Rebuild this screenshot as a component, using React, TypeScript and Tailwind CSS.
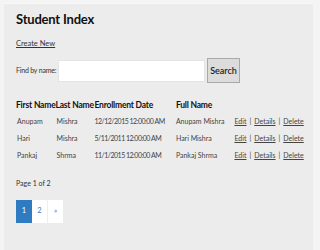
const students = [
  { first: "Anupam", last: "Mishra", date: "12/12/2015 12:00:00 AM", full: "Anupam Mishra" },
  { first: "Hari", last: "Mishra", date: "5/11/2011 12:00:00 AM", full: "Hari Mishra" },
  { first: "Pankaj", last: "Shrma", date: "11/1/2015 12:00:00 AM", full: "Pankaj Shrma" },
];

const App = () => {
  return (
    <div className="h-[250px] w-[320px] overflow-hidden bg-[#f4f4f4] pt-[3px] pl-[4px] pr-[7px] font-['Lato',sans-serif]">
      <div className="h-full border-t border-[#f9f9f9] bg-[#ececec] pl-[12px] pt-[6px] text-[#333]">
        <h1 className="text-[13px] font-bold leading-[18px] tracking-[-0.2px] text-[#111]">
          Student Index
        </h1>

        <a className="mt-[10px] block text-[7.5px] leading-[12px] text-[#333] underline">
          Create New
        </a>

        <div className="mt-[8px] flex items-center">
          <span className="w-[42px] whitespace-nowrap text-[7px] tracking-[-0.2px] text-[#333]">Find by name:</span>
          <div className="h-[22px] w-[147px] border border-[#e4e4e4] bg-white" />
          <button className="ml-[2px] h-[25px] w-[33px] border border-[#a9a9a9] bg-[#dcdcdc] text-[9px] font-semibold text-[#222]">
            Search
          </button>
        </div>

        <table className="mt-[14px] table-fixed border-collapse text-left">
          <thead>
            <tr className="h-[16px] text-[8.5px] font-bold text-[#111]">
              <th className="w-[39px] p-0 tracking-[-0.2px] whitespace-nowrap">First Name</th>
              <th className="w-[39px] p-0 tracking-[-0.2px] whitespace-nowrap">Last Name</th>
              <th className="w-[82px] p-0 tracking-[-0.2px] whitespace-nowrap">Enrollment Date</th>
              <th className="w-[58px] p-0 tracking-[-0.2px] whitespace-nowrap">Full Name</th>
              <th className="w-[80px] p-0" />
            </tr>
          </thead>
          <tbody className="text-[7px] text-[#444]">
            {students.map((s) => (
              <tr key={s.full} className="h-[17px]">
                <td className="p-0 pl-[1px]">{s.first}</td>
                <td className="p-0 pl-[1px]">{s.last}</td>
                <td className="p-0 whitespace-nowrap tracking-[-0.5px]">{s.date}</td>
                <td className="p-0 whitespace-nowrap">{s.full}</td>
                <td className="p-0 pl-[1px] whitespace-nowrap">
                  <a className="underline">Edit</a>
                  <span className="mx-[3px]">|</span>
                  <a className="underline">Details</a>
                  <span className="mx-[3px]">|</span>
                  <a className="underline">Delete</a>
                </td>
              </tr>
            ))}
          </tbody>
        </table>

        <p className="mt-[14px] text-[7px] text-[#333]">Page 1 of 2</p>

        <div className="mt-[11px] flex h-[23px] text-[7.5px]">
          <span className="flex w-[16px] items-center justify-center bg-[#2f7bc2] text-white">1</span>
          <span className="flex w-[15px] items-center justify-center bg-white text-[#3b7fc4]">2</span>
          <span className="flex w-[16px] items-center justify-center border-l border-[#eee] bg-white text-[#3b7fc4]">»</span>
        </div>
      </div>
    </div>
  );
};

export default App;
